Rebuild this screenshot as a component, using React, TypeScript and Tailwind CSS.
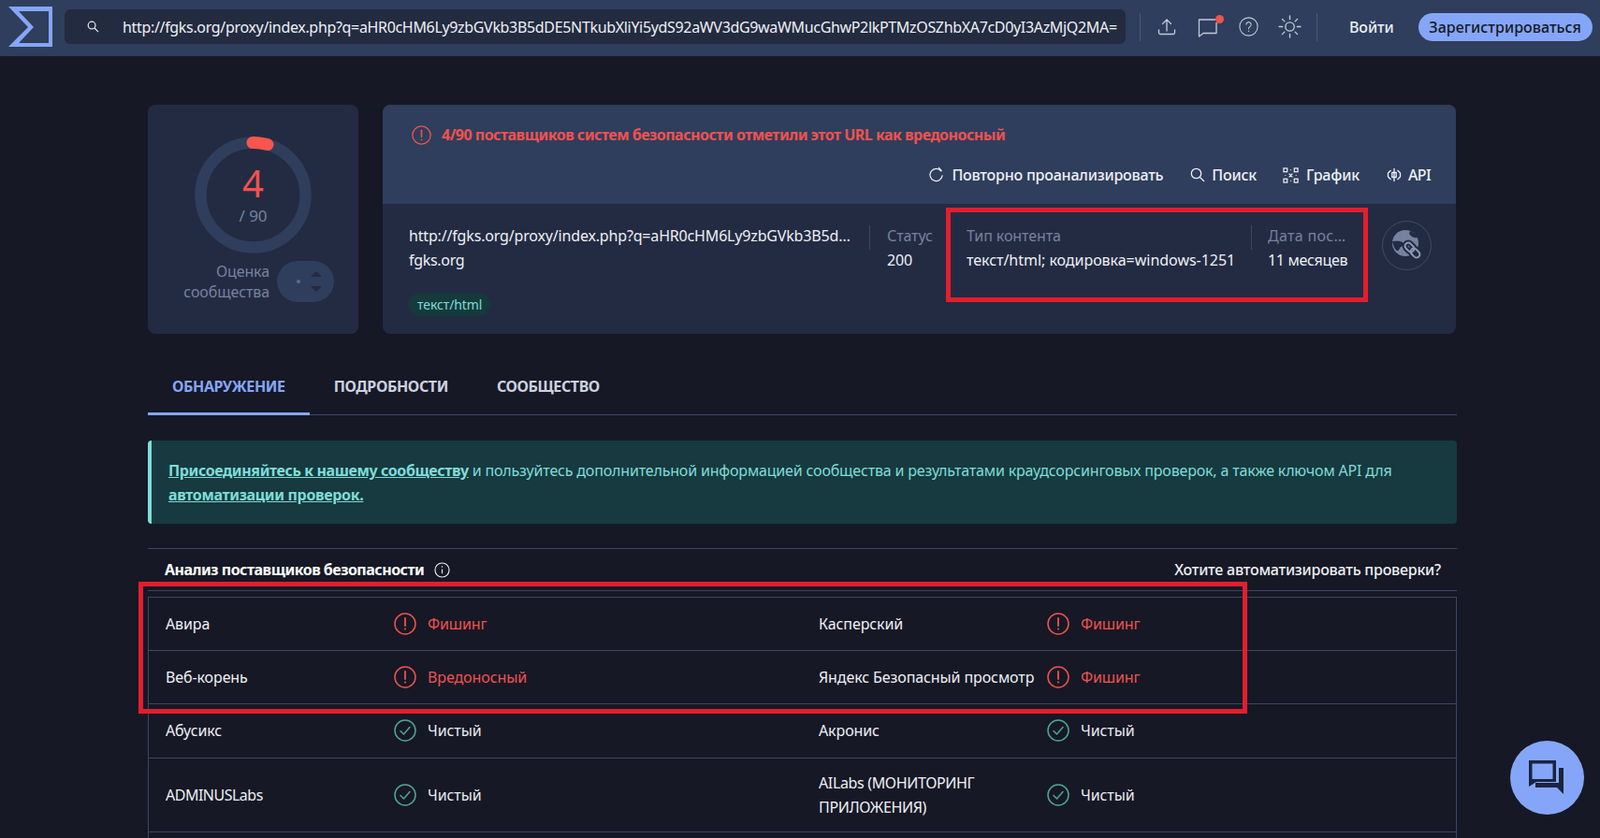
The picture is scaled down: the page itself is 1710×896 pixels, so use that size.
const FONT = "font-['Noto_Sans_CJK_SC','Noto_Sans',sans-serif]";

const ROWS = [
  { name: "Авира", track: "", status: "Фишинг", bad: true, name2: "Касперский", track2: "", status2: "Фишинг", bad2: true, h: "h-[57px]" },
  { name: "Веб-корень", track: "", status: "Вредоносный", bad: true, name2: "Яндекс Безопасный просмотр", track2: "", status2: "Фишинг", bad2: true, h: "h-[57px]" },
  { name: "Абусикс", track: "", status: "Чистый", bad: false, name2: "Акронис", track2: "", status2: "Чистый", bad2: false, h: "h-[58px] pb-[2px]" },
  { name: "ADMINUSLabs", track: "tracking-[-0.5px]", status: "Чистый", bad: false, name2: "AILabs (МОНИТОРИНГ ПРИЛОЖЕНИЯ)", track2: "tracking-[-0.35px]", status2: "Чистый", bad2: false, h: "h-[79px]" },
];

function AlertIcon({ className }: { className?: string }) {
  return (
    <svg viewBox="0 0 24 24" fill="none" stroke="currentColor" strokeWidth="1.5" className={className}>
      <circle cx="12" cy="12" r="11" />
      <path d="M12 6v8" strokeLinecap="round" strokeWidth="1.8" />
      <circle cx="12" cy="17.5" r="1" fill="currentColor" stroke="none" />
    </svg>
  );
}

function CheckIcon({ className }: { className?: string }) {
  return (
    <svg viewBox="0 0 24 24" fill="none" stroke="currentColor" strokeWidth="1.5" className={className}>
      <circle cx="12" cy="12" r="11" />
      <path d="M7 12.5l3.5 3.5L17 8.5" strokeLinecap="round" strokeLinejoin="round" />
    </svg>
  );
}

function Verdict({ label, bad }: { label: string; bad: boolean }) {
  return (
    <div className="flex items-center">
      {bad ? (
        <AlertIcon className="w-[24px] h-[24px] text-[#f0524f]" />
      ) : (
        <CheckIcon className="w-[24px] h-[24px] text-[#4fa596]" />
      )}
      <span className={bad ? "ml-[12px] text-[#f0524f]" : "ml-[12px] text-[#e8ebf2]"}>{label}</span>
    </div>
  );
}

function Field({ label, value, width, labelClass = "", valueClass = "" }: { label: string; value: string; width: string; labelClass?: string; valueClass?: string }) {
  return (
    <div className={width}>
      <div className={`text-[#76829f] truncate ${labelClass}`}>{label}</div>
      <div className={`text-[#eef0f5] whitespace-nowrap ${valueClass}`}>{value}</div>
    </div>
  );
}

export default function App() {
  return (
    <div className={`relative w-[1710px] h-[896px] overflow-hidden bg-[#161825] text-[16px] leading-[26px] tracking-[-0.1px] ${FONT}`}>
      <header className="h-[60px] bg-[#2f3e5c] flex items-center pb-[3px]">
        <svg viewBox="0 0 47 43" className="ml-[9px] w-[47px] h-[43px] shrink-0">
          <path d="M0 0H47V43H0L21 22Z M11 5L27 22L11 39H43V5Z" fill="#85a6f8" fillRule="evenodd" />
        </svg>
        <div className="ml-[13px] w-[1134px] h-[37px] bg-[#232b40] rounded-[6px] flex items-center">
          <svg viewBox="0 0 14 14" fill="none" stroke="#e8ebf2" strokeWidth="1.3" className="ml-[24px] w-[13px] h-[13px] shrink-0">
            <circle cx="5.5" cy="5.5" r="4.2" />
            <path d="M8.6 8.6L13 13" />
          </svg>
          <span className="ml-[25px] w-[1066px] overflow-hidden whitespace-nowrap text-[#eef0f5] tracking-[-0.33px]">
            http://fgks.org/proxy/index.php?q=aHR0cHM6Ly9zbGVkb3B5dDE5NTkubXliYi5ydS92aWV3dG9waWMucGhwP2lkPTMzOSZhbXA7cD0yI3AzMjQ2MA=
          </span>
        </div>
        <div className="ml-[15px] w-px h-[30px] bg-[#4c5a78]" />
        <svg viewBox="0 0 20 20" fill="none" stroke="#c3cbdc" strokeWidth="1.3" className="ml-[18px] w-[20px] h-[20px]">
          <path d="M10 14V2M5.5 6.5L10 2l4.5 4.5M1.5 13v3a1.5 1.5 0 0 0 1.5 1.5h14a1.5 1.5 0 0 0 1.5-1.5v-3" strokeLinecap="round" strokeLinejoin="round" />
        </svg>
        <div className="relative ml-[22px] w-[28px] h-[28px]">
          <svg viewBox="0 0 28 28" fill="none" stroke="#c3cbdc" strokeWidth="1.3" className="w-[28px] h-[28px]">
            <path d="M20 6H2.5v18L7 20.5h14V9" strokeLinejoin="round" />
          </svg>
          <span className="absolute right-[-1px] top-[1px] w-[9px] h-[9px] rounded-full bg-[#f0524f]" />
        </div>
        <svg viewBox="0 0 24 24" fill="none" stroke="#c3cbdc" strokeWidth="1.2" className="ml-[17px] w-[21px] h-[21px]">
          <circle cx="12" cy="12" r="11" />
          <path d="M9 9.3a3 3 0 1 1 4.7 2.6c-1 .7-1.7 1.3-1.7 2.6" strokeLinecap="round" />
          <circle cx="12" cy="17.5" r=".8" fill="#c3cbdc" stroke="none" />
        </svg>
        <svg viewBox="0 0 24 24" fill="none" stroke="#c3cbdc" strokeWidth="1.3" className="ml-[21px] w-[25px] h-[25px]">
          <circle cx="12" cy="12" r="4.5" />
          <path d="M12 1v3.5M12 19.5V23M1 12h3.5M19.5 12H23M4.2 4.2l2.4 2.4M17.4 17.4l2.4 2.4M4.2 19.8l2.4-2.4M17.4 6.6l2.4-2.4" strokeLinecap="round" />
        </svg>
        <div className="ml-[16px] w-px h-[30px] bg-[#4c5a78]" />
        <span className="ml-[34px] font-medium text-[#eef0f5]">Войти</span>
        <button className="ml-[26px] w-[186px] h-[30px] rounded-full bg-[#85a6f8] text-[#161825] font-medium text-[16px] tracking-[0.05px] leading-[30px] text-center">
          Зарегистрироваться
        </button>
      </header>

      <main className="w-[1557px] pl-[158px] pt-[52px]">
        <div className="flex gap-[26px] h-[245px]">
          <section className="w-[225px] rounded-[8px] bg-[#232b42] flex flex-col items-center pt-[34px]">
            <div className="relative w-[125px] h-[125px]">
              <svg viewBox="0 0 125 125" fill="none" className="w-[125px] h-[125px]">
                <circle cx="62.5" cy="62.5" r="56" stroke="#2f3e5c" strokeWidth="12.5" />
                <path d="M62 6.5A56 56 0 0 1 78 8.6" stroke="#f8564e" strokeWidth="13" strokeLinecap="round" />
              </svg>
              <div className="absolute inset-0 flex flex-col items-center pt-[25px]">
                <span className="text-[40px] leading-[50px] text-[#f0524f]">4</span>
                <span className="text-[#76829f] leading-[20px] text-[17px]">/ 90</span>
              </div>
            </div>
            <div className="mt-[7px] flex items-center self-start">
              <div className="text-right text-[#76829f] leading-[22px] w-[130px]">
                Оценка
                <br />
                сообщества
              </div>
              <div className="ml-[8px] mt-[1px] w-[61px] h-[44px] rounded-full bg-[#2f3e5c] flex items-center">
                <span className="ml-[21px] w-[4px] h-[4px] rounded-full bg-[#5f6d8c]" />
                <div className="ml-[11px] flex flex-col gap-[10px]">
                  <span className="w-0 h-0 border-x-[6px] border-x-transparent border-b-[6px] border-b-[#232b42]" />
                  <span className="w-0 h-0 border-x-[6px] border-x-transparent border-t-[6px] border-t-[#232b42]" />
                </div>
              </div>
            </div>
          </section>

          <section className="w-[1147px] rounded-[8px] bg-[#232b42] overflow-hidden">
            <div className="h-[106px] bg-[#2f3e5c] pl-[31px] pr-[27px] pt-[19px]">
              <div className="flex items-center h-[26px]">
                <AlertIcon className="w-[21px] h-[21px] text-[#f0524f]" />
                <span className="ml-[11px] font-bold text-[#f0524f] tracking-[-0.5px]">
                  4/90 поставщиков систем безопасности отметили этот URL как вредоносный
                </span>
              </div>
              <div className="mt-[17px] flex items-center justify-end text-[#eef0f5] font-medium tracking-[-0.2px]">
                <svg viewBox="0 0 16 18" fill="none" stroke="#eef0f5" strokeWidth="1.3" className="w-[15px] h-[18px]">
                  <path d="M13.5 4.5A7 7 0 1 0 15 10" strokeLinecap="round" />
                  <path d="M11 1l3 3.2" strokeLinecap="round" />
                </svg>
                <span className="ml-[9px]">Повторно проанализировать</span>
                <svg viewBox="0 0 16 16" fill="none" stroke="#eef0f5" strokeWidth="1.3" className="ml-[29px] w-[16px] h-[16px]">
                  <circle cx="6.5" cy="6.5" r="5.2" />
                  <path d="M10.5 10.5L15 15" />
                </svg>
                <span className="ml-[7px]">Поиск</span>
                <svg viewBox="0 0 18 18" fill="none" stroke="#eef0f5" strokeWidth="1.3" className="ml-[28px] w-[17px] h-[17px]">
                  <rect x="1" y="1" width="4" height="4" />
                  <rect x="13" y="1" width="4" height="4" />
                  <rect x="1" y="13" width="4" height="4" />
                  <rect x="13" y="13" width="4" height="4" />
                  <path d="M7 7l4 4M11 7l-4 4M9 2.5v1M9 14.5v1M2.5 9h1M14.5 9h1" />
                </svg>
                <span className="ml-[8px]">График</span>
                <svg viewBox="0 0 16 16" fill="none" stroke="#eef0f5" strokeWidth="1.3" className="ml-[29px] w-[16px] h-[16px]">
                  <path d="M4.5 3L1.5 6v4l3 3M11.5 3l3 3v4l-3 3M8 1v14M5.8 5.5h4.4v5H5.8z" strokeLinejoin="round" />
                </svg>
                <span className="ml-[7px] tracking-[-0.6px]">API</span>
              </div>
            </div>
            <div className="flex pl-[28px] pt-[21px]">
              <div className="w-[492px]">
                <div className="w-[472px] truncate text-[#eef0f5] tracking-[-0.17px]">
                  http://fgks.org/proxy/index.php?q=aHR0cHM6Ly9zbGVkb3B5dDE5NTkubXliYi5ydS92aWV3
                </div>
                <div className="text-[#eef0f5] tracking-[-0.3px]">fgks.org</div>
                <span className="mt-[22px] inline-block h-[25px] px-[9px] rounded-full bg-[#153a3c] text-[#7fdcd8] text-[14px] leading-[25px]">
                  текст/html
                </span>
              </div>
              <div className="w-px h-[26px] mt-[2px] bg-[#3a4765]" />
              <div className="ml-[18px] w-[85px]">
                <Field label="Статус" value="200" width="w-[85px]" />
              </div>
              <Field label="Тип контента" value="текст/html; кодировка=windows-1251" width="w-[304px]" valueClass="tracking-[-0.03px]" />
              <div className="w-px h-[26px] mt-[2px] bg-[#3a4765]" />
              <div className="ml-[17px] w-[122px]">
                <Field label="Дата последнего анализа" value="11 месяцев" width="w-[86px]" labelClass="tracking-[0.3px]" valueClass="tracking-[-0.3px]" />
              </div>
              <div className="mt-[-3px] w-[53px] h-[53px] rounded-full border border-[#3f4b68] flex items-center justify-center shrink-0">
                <svg viewBox="0 0 36 36" className="w-[36px] h-[36px]" fill="none">
                  <circle cx="16" cy="15" r="14" fill="#76829f" />
                  <path d="M2 13c5 0 9-1 12 2 2 2-1 3-3 4-2 2-1 4-4 4-3-2-4-6-5-10zM21 2c3 1 6 3 8 7-3 1-6 0-9-4z" fill="#232b42" />
                  <g stroke="#232b42" strokeWidth="6" fill="none">
                    <rect x="15" y="16" width="11" height="7" rx="3.5" transform="rotate(45 20.5 19.5)" />
                    <rect x="21" y="22" width="11" height="7" rx="3.5" transform="rotate(45 26.5 25.5)" />
                  </g>
                  <g stroke="#8d99b5" strokeWidth="2" fill="none">
                    <rect x="15" y="16" width="11" height="7" rx="3.5" transform="rotate(45 20.5 19.5)" />
                    <rect x="21" y="22" width="11" height="7" rx="3.5" transform="rotate(45 26.5 25.5)" />
                  </g>
                </svg>
              </div>
            </div>
          </section>
        </div>

        <nav className="mt-[43px] h-[44px] flex border-b border-[#3a4765] font-bold tracking-[-0.4px]">
          <div className="h-[44px] px-[26px] border-b-[3px] border-[#85a6f8] text-[#85a6f8] leading-[27px]">ОБНАРУЖЕНИЕ</div>
          <div className="h-[44px] px-[26px] text-[#ccd2e0] leading-[27px]">ПОДРОБНОСТИ</div>
          <div className="h-[44px] px-[26px] text-[#ccd2e0] leading-[27px]">СООБЩЕСТВО</div>
        </nav>

        <div className="mt-[27px] h-[89px] rounded-[4px] border-l-[4px] border-[#7fdcd8] bg-[#163a3f] pl-[18px] pt-[19px] pr-[20px] text-[#7fdcd8] tracking-[-0.17px]">
          <a className="font-bold underline tracking-[-0.4px]">Присоединяйтесь к нашему сообществу</a> и пользуйтесь дополнительной информацией сообщества и результатами краудсорсинговых проверок, а также ключом API для{" "}
          <a className="font-bold underline tracking-[-0.34px]">автоматизации проверок.</a>
        </div>

        <div className="mt-[26px] h-[46px] border-y border-[#3a4765] flex items-center justify-between pl-[18px] pr-[17px]">
          <div className="flex items-center font-bold text-white tracking-[-0.5px]">
            Анализ поставщиков безопасности
            <svg viewBox="0 0 18 18" fill="none" stroke="#eef0f5" strokeWidth="1.2" className="ml-[11px] w-[17px] h-[17px]">
              <circle cx="9" cy="9" r="8" />
              <path d="M9 8v5" />
              <circle cx="9" cy="5.3" r=".8" fill="#eef0f5" stroke="none" />
            </svg>
          </div>
          <span className="text-[#eef0f5] font-medium tracking-[-0.22px]">Хотите автоматизировать проверки?</span>
        </div>

        <div className="mt-[6px] border-x border-t border-[#3a4765]">
          {ROWS.map((row) => (
            <div key={row.name} className={`${row.h} flex border-b border-[#3a4765] text-[#eef0f5]`}>
              <div className="w-[698px] pl-[18px] flex items-center">
                <div className={`w-[244px] ${row.track}`}>{row.name}</div>
                <Verdict label={row.status} bad={row.bad} />
              </div>
              <div className="pl-[18px] flex items-center">
                <div className={`w-[244px] ${row.track2}`}>{row.name2}</div>
                <Verdict label={row.status2} bad={row.bad2} />
              </div>
            </div>
          ))}
          <div className="h-[40px]" />
        </div>
      </main>

      <div className="absolute left-[1011px] top-[222px] w-[451px] h-[101px] border-[5px] border-[#e31e2d]" />
      <div className="absolute left-[148px] top-[622px] w-[1185px] h-[141px] border-[5px] border-[#e31e2d]" />

      <button className="absolute left-[1614px] top-[792px] w-[79px] h-[79px] rounded-full bg-[#85a6f8]">
        <svg viewBox="-6 -8 79 79" className="w-[79px] h-[79px]">
          <path d="M14 13H43V36H22L14 41Z M17.5 16.5V33H39.5V16.5Z" fill="#1a2440" fillRule="evenodd" />
          <path d="M46 21H51V49L44 42H21V37H46Z" fill="#1a2440" />
        </svg>
      </button>
    </div>
  );
}
